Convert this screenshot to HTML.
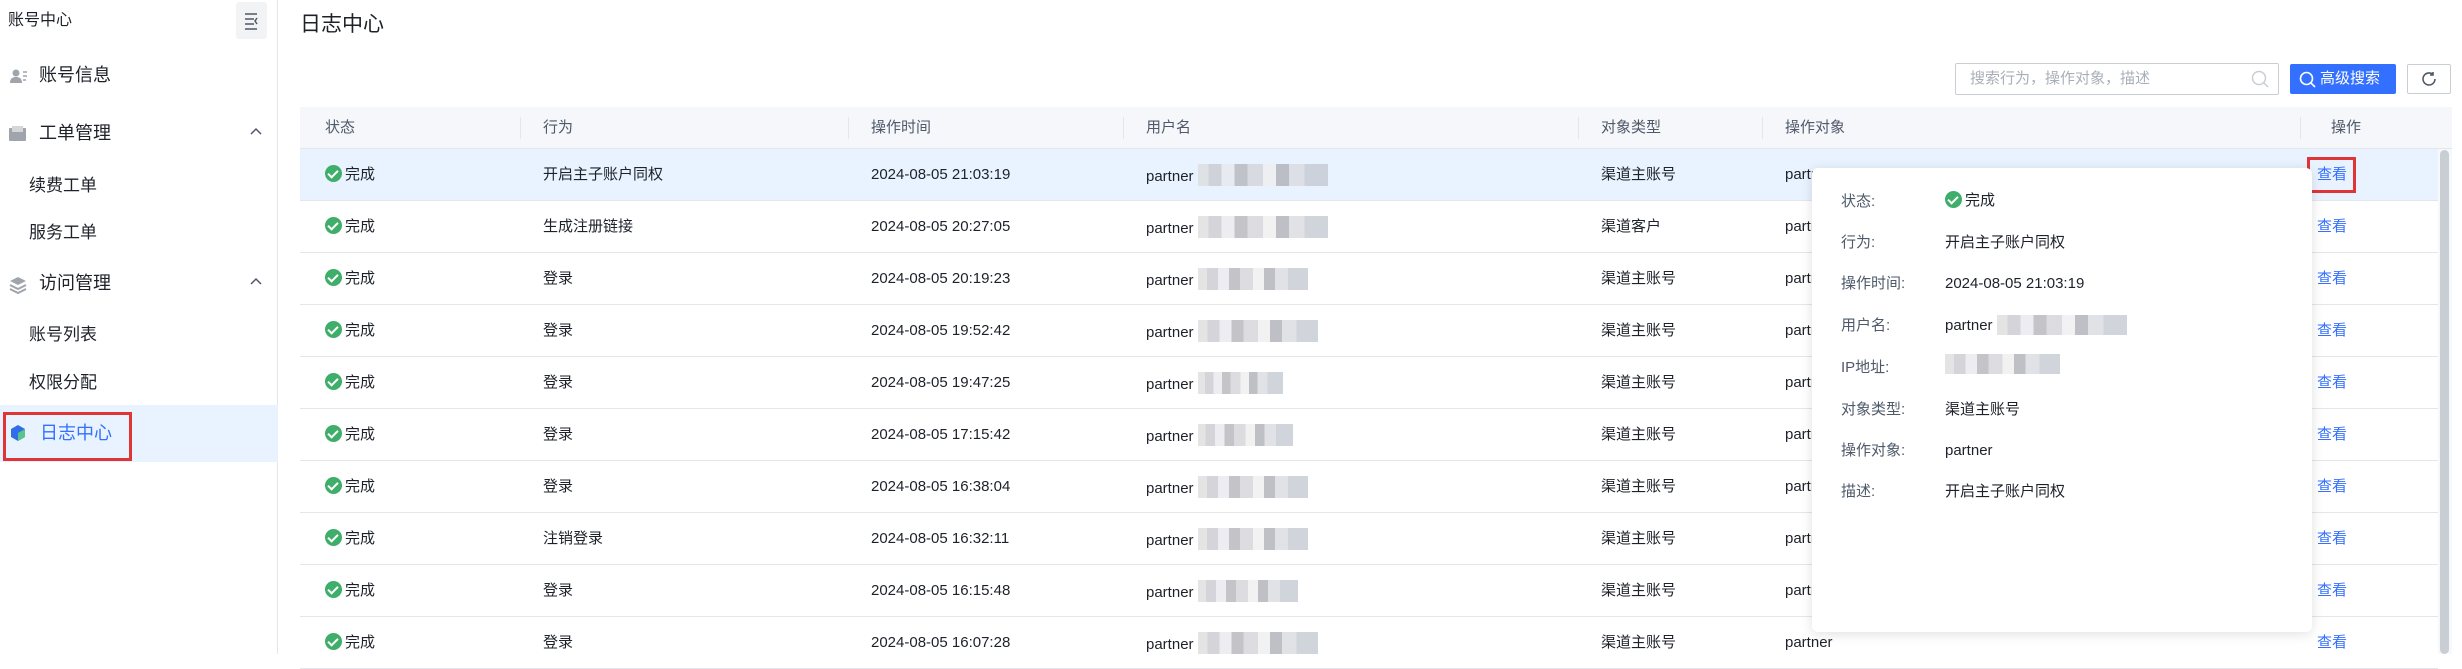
<!DOCTYPE html>
<html><head><meta charset="utf-8"><style>
*{margin:0;padding:0;box-sizing:border-box}
body{width:2462px;height:654px;overflow:hidden;background:#fff;font-family:"Liberation Sans","Noto Sans CJK SC",sans-serif;color:#1d2129;position:relative;line-height:22px}
.a{position:absolute;white-space:nowrap}
.side{position:absolute;left:0;top:0;width:278px;height:654px;border-right:1px solid #e5e6eb;background:#fff}
.mi{font-size:18px;color:#1d2129}
.sub{font-size:17px;color:#1d2129}
.hdr{position:absolute;left:300px;top:107px;width:2152px;height:42px;background:#f5f7fa;border-bottom:1px solid #e5e6eb}
.hdr span{position:absolute;top:10px;font-size:15px;color:#4e5969}
.hdr i{position:absolute;top:10px;width:1px;height:22px;background:#e5e6eb}
.row{position:absolute;left:300px;width:2138px;height:52px;border-bottom:1px solid #e5e6eb;font-size:15px}
.row span{position:absolute;top:15px;white-space:nowrap;line-height:22px}
.ok{display:inline-block;width:17px;height:17px;border-radius:50%;background:#3fae6a;vertical-align:-3px;margin-right:3px;position:relative}
.ok:after{content:"";position:absolute;left:5px;top:3px;width:4px;height:8px;border:solid #fff;border-width:0 2px 2px 0;transform:rotate(45deg)}
.blur{display:inline-block;height:22px;vertical-align:-5px;background:linear-gradient(90deg,#ddd 0 8%,#c9cad0 8% 18%,#e8e8ee 18% 28%,#b5b6bb 28% 38%,#d3d4d8 38% 50%,#eee 50% 60%,#aeb0b8 60% 70%,#d9dbe0 70% 82%,#c5c9d2 82% 100%);opacity:.8}
.link{color:#3370ff}
.pop{position:absolute;left:1812px;top:168px;width:500px;height:464px;background:#fff;border-radius:6px;box-shadow:0 2px 12px rgba(0,0,0,.12)}
.pop .l{position:absolute;left:29px;font-size:15px;color:#4e5969;line-height:22px}
.pop .v{position:absolute;left:133px;font-size:15px;color:#1d2129;white-space:nowrap;line-height:22px}
</style></head><body>
<div class="side">
<div class="a" style="left:8px;top:10px;font-size:16px">账号中心</div>
<div class="a" style="left:236px;top:2px;width:31px;height:37px;background:#f2f3f5;border-radius:3px"><svg width="31" height="37"><path d="M9 12h12M9 17h9M9 22h9M9 27h12M21 16l-2 3 2 3" stroke="#4e5969" stroke-width="1.5" fill="none"/></svg></div>
<svg class="a" style="left:10px;top:68px" width="18" height="16"><circle cx="6" cy="5" r="3.5" fill="#a0a4ab"/><path d="M0 15c0-5 3-6 6-6s6 1 6 6z" fill="#a0a4ab"/><path d="M13 4h4M13 8h4M13 12h3" stroke="#a0a4ab" stroke-width="1.5"/></svg>
<div class="a mi" style="left:39px;top:64px">账号信息</div>
<svg class="a" style="left:9px;top:126px" width="18" height="16"><rect x="0" y="2" width="17" height="13" rx="1" fill="#a0a4ab"/><rect x="3" y="0" width="11" height="6" fill="#d4d6da"/></svg>
<div class="a mi" style="left:39px;top:122px">工单管理</div>
<svg class="a" style="left:250px;top:127px" width="12" height="8"><path d="M1 7l5-5 5 5" stroke="#4e5969" stroke-width="1.5" fill="none"/></svg>
<div class="a sub" style="left:29px;top:175px">续费工单</div>
<div class="a sub" style="left:29px;top:222px">服务工单</div>
<svg class="a" style="left:9px;top:276px" width="18" height="18"><path d="M9 1l8 4-8 4-8-4z" fill="#a0a4ab"/><path d="M1 9l8 4 8-4M1 13l8 4 8-4" stroke="#a0a4ab" stroke-width="2" fill="none"/></svg>
<div class="a mi" style="left:39px;top:272px">访问管理</div>
<svg class="a" style="left:250px;top:277px" width="12" height="8"><path d="M1 7l5-5 5 5" stroke="#4e5969" stroke-width="1.5" fill="none"/></svg>
<div class="a sub" style="left:29px;top:324px">账号列表</div>
<div class="a sub" style="left:29px;top:372px">权限分配</div>
<div class="a" style="left:0;top:405px;width:278px;height:57px;background:#e8f3ff"></div>
<div class="a" style="left:3px;top:412px;width:129px;height:49px;border:3px solid #e03535"></div>
<svg class="a" style="left:10px;top:424px" width="16" height="18"><path d="M8 1l7 4v8l-7 4-7-4V5z" fill="#2f6ee8"/><path d="M8 9l7-4v8l-7 4z" fill="#5bc48a"/></svg>
<div class="a" style="left:40px;top:422px;font-size:18px;color:#3370ff">日志中心</div>
</div>
<div class="a" style="left:300px;top:14px;font-size:21px">日志中心</div>
<div class="a" style="left:1955px;top:63px;width:324px;height:32px;border:1px solid #c9cdd4;border-radius:2px"></div>
<div class="a" style="left:1970px;top:68px;font-size:15px;color:#a9aeb8">搜索行为，操作对象，描述</div>
<svg class="a" style="left:2251px;top:70px" width="18" height="18"><circle cx="8" cy="8" r="6.5" stroke="#c9cdd4" stroke-width="1.5" fill="none"/><path d="M13 13l4 4" stroke="#c9cdd4" stroke-width="1.5"/></svg>
<div class="a" style="left:2290px;top:64px;width:106px;height:30px;background:#3370ff;border-radius:2px"></div>
<svg class="a" style="left:2299px;top:71px" width="17" height="17"><circle cx="7.5" cy="7.5" r="6" stroke="#fff" stroke-width="1.6" fill="none"/><path d="M12 12l4 4" stroke="#fff" stroke-width="1.6"/></svg>
<div class="a" style="left:2320px;top:68px;font-size:15px;color:#fff">高级搜索</div>
<div class="a" style="left:2407px;top:64px;width:44px;height:30px;border:1px solid #c9cdd4;border-radius:2px"></div>
<svg class="a" style="left:2420px;top:70px" width="18" height="18"><path d="M15 9a6 6 0 1 1-2-4.5" stroke="#4e5969" stroke-width="1.6" fill="none"/><path d="M13 2v3h-3" stroke="#4e5969" stroke-width="1.6" fill="none"/></svg>
<div class="hdr">
<span style="left:25px">状态</span><i style="left:220px"></i><span style="left:243px">行为</span><i style="left:548px"></i><span style="left:571px">操作时间</span><i style="left:823px"></i><span style="left:846px">用户名</span><i style="left:1278px"></i><span style="left:1301px">对象类型</span><i style="left:1462px"></i><span style="left:1485px">操作对象</span><i style="left:2000px"></i><span style="left:2031px">操作</span>
</div>
<div class="row" style="top:149px;background:#e8f3ff"><span style="left:25px"><b class="ok"></b>完成</span><span style="left:243px">开启主子账户同权</span><span style="left:571px">2024-08-05 21:03:19</span><span style="left:846px">partner <b class="blur" style="width:130px"></b></span><span style="left:1301px">渠道主账号</span><span style="left:1485px">partner</span><span class="link" style="left:2017px">查看</span></div>
<div class="row" style="top:201px"><span style="left:25px"><b class="ok"></b>完成</span><span style="left:243px">生成注册链接</span><span style="left:571px">2024-08-05 20:27:05</span><span style="left:846px">partner <b class="blur" style="width:130px"></b></span><span style="left:1301px">渠道客户</span><span style="left:1485px">partner</span><span class="link" style="left:2017px">查看</span></div>
<div class="row" style="top:253px"><span style="left:25px"><b class="ok"></b>完成</span><span style="left:243px">登录</span><span style="left:571px">2024-08-05 20:19:23</span><span style="left:846px">partner <b class="blur" style="width:110px"></b></span><span style="left:1301px">渠道主账号</span><span style="left:1485px">partner</span><span class="link" style="left:2017px">查看</span></div>
<div class="row" style="top:305px"><span style="left:25px"><b class="ok"></b>完成</span><span style="left:243px">登录</span><span style="left:571px">2024-08-05 19:52:42</span><span style="left:846px">partner <b class="blur" style="width:120px"></b></span><span style="left:1301px">渠道主账号</span><span style="left:1485px">partner</span><span class="link" style="left:2017px">查看</span></div>
<div class="row" style="top:357px"><span style="left:25px"><b class="ok"></b>完成</span><span style="left:243px">登录</span><span style="left:571px">2024-08-05 19:47:25</span><span style="left:846px">partner <b class="blur" style="width:85px"></b></span><span style="left:1301px">渠道主账号</span><span style="left:1485px">partner</span><span class="link" style="left:2017px">查看</span></div>
<div class="row" style="top:409px"><span style="left:25px"><b class="ok"></b>完成</span><span style="left:243px">登录</span><span style="left:571px">2024-08-05 17:15:42</span><span style="left:846px">partner <b class="blur" style="width:95px"></b></span><span style="left:1301px">渠道主账号</span><span style="left:1485px">partner</span><span class="link" style="left:2017px">查看</span></div>
<div class="row" style="top:461px"><span style="left:25px"><b class="ok"></b>完成</span><span style="left:243px">登录</span><span style="left:571px">2024-08-05 16:38:04</span><span style="left:846px">partner <b class="blur" style="width:110px"></b></span><span style="left:1301px">渠道主账号</span><span style="left:1485px">partner</span><span class="link" style="left:2017px">查看</span></div>
<div class="row" style="top:513px"><span style="left:25px"><b class="ok"></b>完成</span><span style="left:243px">注销登录</span><span style="left:571px">2024-08-05 16:32:11</span><span style="left:846px">partner <b class="blur" style="width:110px"></b></span><span style="left:1301px">渠道主账号</span><span style="left:1485px">partner</span><span class="link" style="left:2017px">查看</span></div>
<div class="row" style="top:565px"><span style="left:25px"><b class="ok"></b>完成</span><span style="left:243px">登录</span><span style="left:571px">2024-08-05 16:15:48</span><span style="left:846px">partner <b class="blur" style="width:100px"></b></span><span style="left:1301px">渠道主账号</span><span style="left:1485px">partner</span><span class="link" style="left:2017px">查看</span></div>
<div class="row" style="top:617px"><span style="left:25px"><b class="ok"></b>完成</span><span style="left:243px">登录</span><span style="left:571px">2024-08-05 16:07:28</span><span style="left:846px">partner <b class="blur" style="width:120px"></b></span><span style="left:1301px">渠道主账号</span><span style="left:1485px">partner</span><span class="link" style="left:2017px">查看</span></div>
<div class="a" style="left:2438px;top:149px;width:14px;height:505px;background:#f7f8fa"></div>
<div class="a" style="left:2440px;top:150px;width:9px;height:504px;background:#c9cdd4;border-radius:5px"></div>
<div class="a" style="left:2307px;top:157px;width:49px;height:36px;border:3px solid #e03535"></div>
<div class="pop">
<div class="l" style="top:23px">状态:</div><div class="v" style="top:22px"><b class="ok"></b>完成</div>
<div class="l" style="top:64px">行为:</div><div class="v" style="top:64px">开启主子账户同权</div>
<div class="l" style="top:105px">操作时间:</div><div class="v" style="top:105px">2024-08-05 21:03:19</div>
<div class="l" style="top:147px">用户名:</div><div class="v" style="top:147px">partner <b class="blur" style="width:130px;height:20px"></b></div>
<div class="l" style="top:189px">IP地址:</div><div class="v" style="top:186px"><b class="blur" style="width:115px;height:20px"></b></div>
<div class="l" style="top:231px">对象类型:</div><div class="v" style="top:231px">渠道主账号</div>
<div class="l" style="top:272px">操作对象:</div><div class="v" style="top:272px">partner</div>
<div class="l" style="top:313px">描述:</div><div class="v" style="top:313px">开启主子账户同权</div>
</div>
</body></html>
